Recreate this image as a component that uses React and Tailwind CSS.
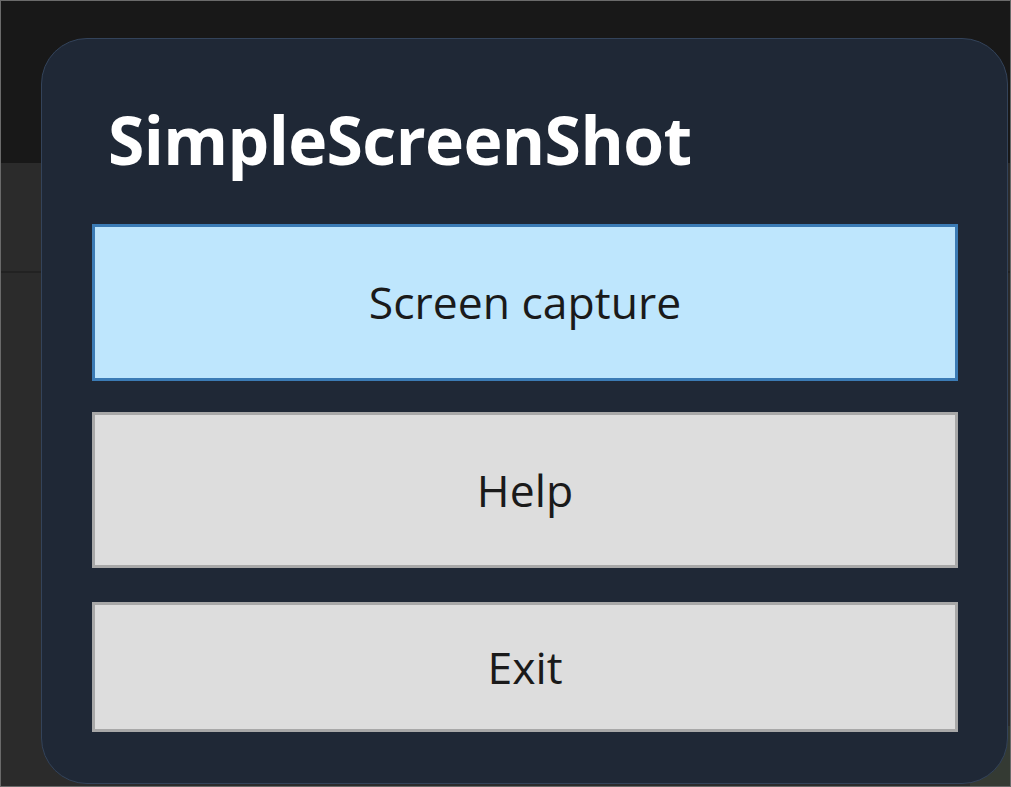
export default function App() {
  return (
    <div className="relative h-[787px] w-[1011px] overflow-hidden border border-[#6a6a6a] bg-[#2b2b2b]" style={{ fontFamily: '"Open Sans", "Noto Sans", sans-serif' }}>
      <div className="h-[162px] bg-[#181818]" />
      <div className="h-[108px]" />
      <div className="h-[2px] bg-[#222222]" />
      <div className="absolute bottom-0 right-0 h-[60px] w-[40px] bg-[#343a33]" />
      <div className="absolute left-[40px] top-[37px] flex h-[746px] w-[967px] flex-col rounded-[46px] border border-[#33435a] bg-[#1f2836] pl-[50px] pr-[49px]">
        <h1 className="mt-[67px] h-[66px] pl-[16px] text-[66px] font-bold leading-none tracking-[-0.6px] text-white">SimpleScreenShot</h1>
        <div className="mt-[52px] flex flex-col">
          <button className="flex h-[157px] items-center justify-center border-[3px] border-[#3b7bb5] bg-[#bee6fd] text-[44.5px] text-[#1a1a1a]">Screen capture</button>
          <button className="mt-[31px] flex h-[156px] items-center justify-center border-[3px] border-[#a8a8a8] bg-[#dddddd] text-[44.5px] text-[#1a1a1a]">Help</button>
          <button className="mt-[34px] flex h-[130px] items-center justify-center border-[3px] border-[#a8a8a8] bg-[#dddddd] text-[44.5px] text-[#1a1a1a]">Exit</button>
        </div>
      </div>
    </div>
  );
}
